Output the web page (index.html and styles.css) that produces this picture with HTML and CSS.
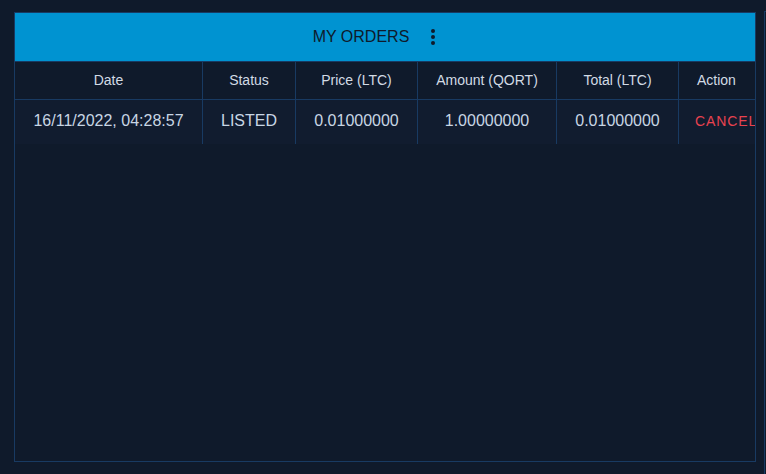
FILE: index.html
```html
<!DOCTYPE html>
<html lang="en">
<head>
    <meta charset="UTF-8">
    <meta name="viewport" content="width=device-width, initial-scale=1.0">
    <title>My Orders</title>
    <link rel="stylesheet" href="styles.css">
</head>
<body>
    <div class="layout">
        <div class="panel">
            <div class="panel-header">
                <span class="panel-title">MY ORDERS</span>
                <button class="icon-btn" aria-label="More">
                    <svg width="24" height="24" viewBox="0 0 24 24">
                        <circle cx="12" cy="6" r="2"/>
                        <circle cx="12" cy="12" r="2"/>
                        <circle cx="12" cy="18" r="2"/>
                    </svg>
                </button>
            </div>
            <div class="orders">
                <div class="row head">
                    <div class="cell">Date</div>
                    <div class="cell">Status</div>
                    <div class="cell">Price (LTC)</div>
                    <div class="cell">Amount (QORT)</div>
                    <div class="cell">Total (LTC)</div>
                    <div class="cell">Action</div>
                </div>
                <div class="row data">
                    <div class="cell">16/11/2022, 04:28:57</div>
                    <div class="cell">LISTED</div>
                    <div class="cell">0.01000000</div>
                    <div class="cell">1.00000000</div>
                    <div class="cell">0.01000000</div>
                    <div class="cell action"><button class="cancel-btn">Cancel</button></div>
                </div>
            </div>
        </div>
        <div class="panel side"></div>
    </div>
</body>
</html>
```

FILE: styles.css
```css
body {
    margin: 0;
    padding: 0;
    background-color: #0f1a2b;
    font-family: 'Liberation Sans', Arial, sans-serif;
    overflow: hidden;
}
.layout {
    display: flex;
    gap: 8px;
    padding: 12px 0 0 14px;
    height: 474px;
    box-sizing: border-box;
}
.panel {
    flex: 0 0 742px;
    height: 450px;
    box-sizing: border-box;
    border: 1px solid #183a62;
    overflow: hidden;
}
.panel.side {
    flex: 0 0 2px;
    height: 463px;
    margin-top: -1px;
    border-right: none;
    border-bottom: none;
}
.panel-header {
    height: 48px;
    background-color: #0093d1;
    border-bottom: 1px solid #183a62;
    display: flex;
    justify-content: center;
    align-items: center;
}
.panel-title {
    font-size: 16px;
    color: #0f1a2b;
}
.icon-btn {
    width: 48px;
    height: 48px;
    border: none;
    background: none;
    padding: 0;
    display: flex;
    align-items: center;
    justify-content: center;
    fill: #0f1a2b;
    cursor: pointer;
}
.orders {
    width: 830px;
}
.row {
    display: grid;
    grid-template-columns: 188px 93px 122px 139px 122px 166px;
}
.row.head {
    height: 37px;
    border-bottom: 1px solid #183a62;
    font-size: 14px;
    color: #d2dbe5;
}
.row.head .cell {
    padding-bottom: 2px;
}
.row.data {
    height: 44px;
    font-size: 16px;
    color: #c8d6e4;
    background-color: #111c2f;
}
.row.data .cell {
    padding-bottom: 3px;
}
.cell {
    box-sizing: border-box;
    border-right: 1px solid #183a62;
    display: flex;
    align-items: center;
    justify-content: center;
    white-space: nowrap;
}
.row.head .cell:last-child {
    justify-content: flex-start;
    padding-left: 18px;
}
.cell.action {
    justify-content: flex-start;
    padding-left: 8px;
}
.cancel-btn {
    background: none;
    border: none;
    padding: 0 8px;
    font-family: inherit;
    font-size: 14px;
    letter-spacing: 0.9px;
    text-transform: uppercase;
    color: #e8424f;
    cursor: pointer;
}
```
